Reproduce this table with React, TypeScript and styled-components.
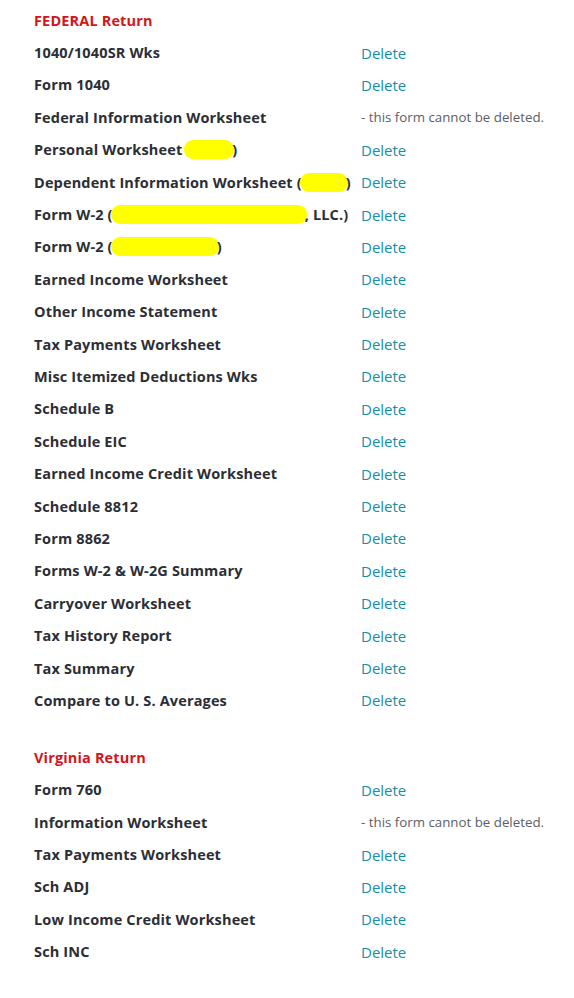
import React from "react";
import styled, { createGlobalStyle } from "styled-components";

const Global = createGlobalStyle`
  html, body { margin: 0; padding: 0; background: #ffffff; }
  body { font-family: "Open Sans", sans-serif; }
`;

const Page = styled.div`
  padding: 4px 0 0 34px;
  width: 540px;
`;

const Section = styled.section`
  display: grid;
  grid-template-columns: 327px auto;
  grid-auto-rows: 32.4px;
  align-items: center;
  & + & { margin-top: 24.6px; }
`;

const Heading = styled.h2`
  grid-column: 1 / -1;
  margin: 0;
  font-size: 14.5px;
  font-weight: 700;
  letter-spacing: 0.15px;
  color: #d2151b;
`;

const FormName = styled.div`
  font-size: 14.5px;
  font-weight: 700;
  letter-spacing: 0.15px;
  color: #2c2e35;
  white-space: nowrap;
`;

const DeleteLink = styled.a`
  font-size: 15px;
  color: #178ea3;
  text-decoration: none;
  cursor: pointer;
`;

const Note = styled.span`
  font-size: 13.3px;
  color: #5c5e66;
`;

const Blot = styled.span<{ $w: number }>`
  display: inline-block;
  width: ${(p) => p.$w}px;
  height: 19px;
  vertical-align: -4px;
  background: #ffff00;
  border-radius: 9px;
  margin: 0 -2px;
`;

type Row = { name: React.ReactNode; locked?: boolean };

const federal: Row[] = [
  { name: "1040/1040SR Wks" },
  { name: "Form 1040" },
  { name: "Federal Information Worksheet", locked: true },
  { name: <>Personal Worksheet <Blot $w={50} />)</> },
  { name: <>Dependent Information Worksheet (<Blot $w={48} />)</> },
  { name: <>Form W-2 (<Blot $w={196} />, LLC.)</> },
  { name: <>Form W-2 (<Blot $w={108} />)</> },
  { name: "Earned Income Worksheet" },
  { name: "Other Income Statement" },
  { name: "Tax Payments Worksheet" },
  { name: "Misc Itemized Deductions Wks" },
  { name: "Schedule B" },
  { name: "Schedule EIC" },
  { name: "Earned Income Credit Worksheet" },
  { name: "Schedule 8812" },
  { name: "Form 8862" },
  { name: "Forms W-2 & W-2G Summary" },
  { name: "Carryover Worksheet" },
  { name: "Tax History Report" },
  { name: "Tax Summary" },
  { name: "Compare to U. S. Averages" },
];

const virginia: Row[] = [
  { name: "Form 760" },
  { name: "Information Worksheet", locked: true },
  { name: "Tax Payments Worksheet" },
  { name: "Sch ADJ" },
  { name: "Low Income Credit Worksheet" },
  { name: "Sch INC" },
];

const FormSection = ({ title, rows }: { title: string; rows: Row[] }) => (
  <Section>
    <Heading>{title}</Heading>
    {rows.map((r, i) => (
      <React.Fragment key={i}>
        <FormName>{r.name}</FormName>
        {r.locked ? (
          <Note>- this form cannot be deleted.</Note>
        ) : (
          <div>
            <DeleteLink>Delete</DeleteLink>
          </div>
        )}
      </React.Fragment>
    ))}
  </Section>
);

export default function App() {
  return (
    <>
      <Global />
      <Page>
        <FormSection title="FEDERAL Return" rows={federal} />
        <FormSection title="Virginia Return" rows={virginia} />
      </Page>
    </>
  );
}
